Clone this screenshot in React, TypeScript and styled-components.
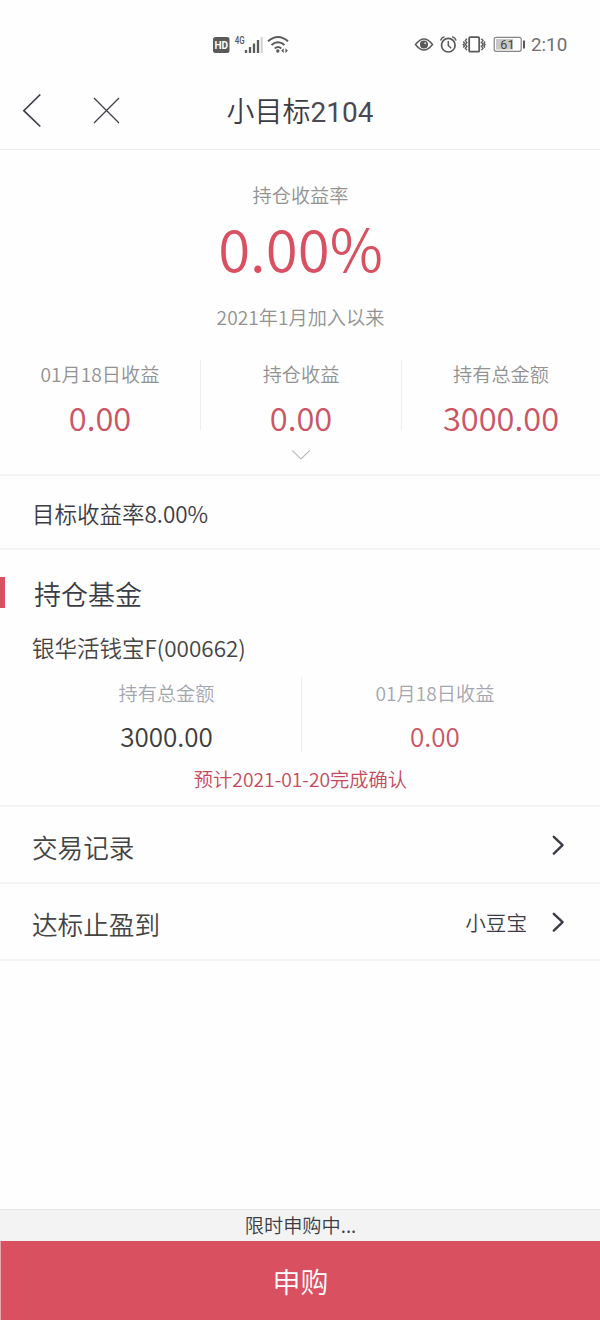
import React from "react";
import styled, { createGlobalStyle } from "styled-components";

const RED = "#d95060";
const INK = "#3c3c46";

const GlobalStyle = createGlobalStyle`
  * { box-sizing: border-box; }
  body {
    margin: 0;
    background: #fefefe;
    font-family: "Noto Sans CJK SC", sans-serif;
    font-weight: 350;
  }
`;

const Screen = styled.div`
  display: flex;
  flex-direction: column;
  width: 600px;
  height: 1320px;
  overflow: hidden;
  background: #fefefe;
  color: ${INK};
`;

const StatusBar = styled.div`
  display: flex;
  align-items: center;
  height: 72px;
  padding: 17px 33px 0 212px;
`;

const StatusGroup = styled.div`
  display: flex;
  align-items: center;
`;

const StatusSpacer = styled.div`
  flex: 1;
`;

const Clock = styled.span`
  width: 36px;
  margin-left: 5px;
  font: 400 18.8px/22px Roboto, sans-serif;
  color: #707070;
  white-space: nowrap;
`;

const NavBar = styled.header`
  display: grid;
  grid-template-columns: 200px 200px 200px;
  align-items: center;
  height: 78px;
  border-bottom: 1px solid #ebebed;
`;

const NavActions = styled.div`
  display: flex;
  align-items: center;
  gap: 51px;
  padding-left: 22px;
`;

const NavTitle = styled.h1`
  margin: 0;
  padding-top: 1px;
  font: 350 28px/40px "Noto Sans CJK SC", sans-serif;
  text-align: center;
  white-space: nowrap;
`;

const TitleNumber = styled.span`
  font-family: Roboto, sans-serif;
  font-weight: 400;
  color: #4a4a54;
`;

const Text = styled.div<{ $size: number; $line: number; $color?: string }>`
  font-size: ${(p) => p.$size}px;
  line-height: ${(p) => p.$line}px;
  color: ${(p) => p.$color ?? INK};
  white-space: nowrap;
`;

const Summary = styled.section`
  display: flex;
  flex-direction: column;
  align-items: center;
  height: 326px;
  padding-top: 31px;
  border-bottom: 2px solid #f3f3f4;
`;

const Caption = styled(Text)`
  padding-left: 1px;
`;

const Rate = styled.div`
  height: 94px;
  padding: 5px 0 0 1px;
`;

const StatRow = styled.div`
  display: grid;
  grid-template-columns: 201px 201px 198px;
  width: 600px;
  margin-top: 29px;
`;

const Stat = styled.div<{ $divided?: boolean }>`
  display: flex;
  flex-direction: column;
  align-items: center;
  height: 70px;
  border-right: ${(p) => (p.$divided ? "1px solid #eeeeef" : "0")};
`;

const Expand = styled.div`
  display: flex;
  height: 11px;
  margin: 19px 0 0 1px;
`;

const TargetRow = styled.section`
  display: flex;
  align-items: center;
  height: 74px;
  padding: 2px 32px 0;
  border-bottom: 2px solid #f3f3f4;
`;

const Holdings = styled.section`
  height: 257px;
  padding-top: 27px;
  border-bottom: 2px solid #f3f3f4;
`;

const SectionHead = styled.div`
  display: flex;
  align-items: center;
  height: 34px;
`;

const Accent = styled.div`
  width: 5px;
  height: 31px;
  margin: -3px 29px 0 0;
  background: ${RED};
`;

const FundName = styled.div`
  padding: 20px 32px 0;
`;

const FundStats = styled.div`
  display: grid;
  grid-template-columns: 302px 298px;
  margin-top: 14px;
`;

const FundStat = styled(Stat)<{ $left?: number; $right?: number }>`
  height: 75px;
  padding: 1px ${(p) => p.$right ?? 0}px 0 ${(p) => p.$left ?? 0}px;
`;

const Notice = styled.div`
  display: flex;
  justify-content: center;
  margin-top: 13px;
  padding-left: 1px;
`;

const MenuRow = styled.div`
  display: flex;
  align-items: center;
  justify-content: space-between;
  height: 77px;
  padding: 0 35px 0 32px;
  border-bottom: 2px solid #f3f3f4;
`;

const MenuLabel = styled.div`
  padding-top: 5px;
  font-size: 25.6px;
  line-height: 38px;
  color: #444;
`;

const MenuEnd = styled.div`
  display: flex;
  align-items: center;
  gap: 24px;
`;

const Footer = styled.footer`
  margin-top: auto;
`;

const Hint = styled.div`
  display: flex;
  justify-content: center;
  height: 32px;
  padding-left: 1px;
  border-top: 1px solid #e6e6e6;
  background: #f3f3f3;
`;

const BuyButton = styled.button`
  display: flex;
  justify-content: center;
  align-items: center;
  width: 100%;
  height: 79px;
  padding: 1px 0 0 0;
  border: 0;
  border-left: 1px solid #eba4ac;
  background: ${RED};
  color: #fff;
  font: 350 28px/40px "Noto Sans CJK SC", sans-serif;
`;

const NetworkIcons = () => (
  <svg width="78" height="22" viewBox="212 34 78 22" fill="none">
    <rect x="213" y="37" width="16.5" height="16" rx="2.5" fill="#5a5a5a" />
    <text x="221.2" y="48.8" fill="#fff" fontFamily="Roboto" fontWeight="700" fontSize="10" textAnchor="middle">HD</text>
    <text x="234.8" y="44" fill="#555" fontFamily="Roboto" fontWeight="500" fontSize="10.5" textLength="10" lengthAdjust="spacingAndGlyphs">4G</text>
    <path d="M246 53v-3M250 53v-6M254 53v-9.5M258 53v-13" stroke="#5a5a5a" strokeWidth="2.3" />
    <path d="M261.7 53V37" stroke="#d0d0d0" strokeWidth="2" />
    <path d="M268 41.3Q278 32.7 288 41.3M271.5 45Q278 39.5 284.5 45M274.7 48.4Q278 45.8 281.3 48.4" stroke="#5a5a5a" strokeWidth="1.9" />
    <circle cx="277.8" cy="51" r="1.7" fill="#5a5a5a" />
    <path d="M281.2 50.7l2.5-2.4v4.8zM287.9 50.7l-2.5-2.4v4.8z" fill="#5a5a5a" />
  </svg>
);

const DeviceIcons = () => (
  <svg width="112" height="22" viewBox="414 34 112 22" fill="none" stroke="#5a5a5a" strokeWidth="1.5">
    <path d="M415.5 44.5Q424 33.5 432.5 44.5Q424 55.5 415.5 44.5Z" />
    <circle cx="424" cy="44.5" r="3.3" fill="#5a5a5a" />
    <circle cx="425.2" cy="43.3" r="1" fill="#ddd" stroke="none" />
    <circle cx="448.3" cy="45.2" r="6.8" strokeWidth="1.7" />
    <path d="M448.3 41v4.5l2.8 2.7M440.5 40.5q1-3 4-3.9M452.1 36.6q3 .9 4 3.9" />
    <rect x="469.2" y="37.2" width="10" height="14.5" rx="1" strokeWidth="1.8" />
    <path d="M467 38.7l-1.7 1.9 1.7 1.9-1.7 1.9 1.7 1.9-1.7 1.9 1.7 1.9M463.3 41.5l1.2 1.5-1.2 1.5 1.2 1.5-1.2 1.5M481.4 38.7l1.7 1.9-1.7 1.9 1.7 1.9-1.7 1.9 1.7 1.9-1.7 1.9M485.1 41.5l-1.2 1.5 1.2 1.5-1.2 1.5 1.2 1.5" strokeWidth="1.3" />
    <rect x="494.2" y="37.3" width="27" height="14" rx="2" stroke="#858585" strokeWidth="1.2" />
    <rect x="496" y="39" width="17" height="10.6" fill="#c8c8c8" stroke="none" />
    <path d="M524 40.5v8" strokeWidth="2" />
    <text x="507.4" y="49" fill="#444" stroke="none" fontFamily="Roboto" fontWeight="400" fontSize="12.5" textAnchor="middle">61</text>
  </svg>
);

const BackIcon = () => (
  <svg width="20" height="34" viewBox="0 0 20 34" fill="none" stroke={INK} strokeWidth="1.6">
    <path d="M18.3 .5L1.8 16.7L18.3 32.5" />
  </svg>
);

const CloseIcon = () => (
  <svg width="27" height="27" viewBox="0 0 27 27" fill="none" stroke={INK} strokeWidth="1.2">
    <path d="M1 1L26 26M26 1L1 26" />
  </svg>
);

const ExpandIcon = () => (
  <svg width="20" height="11" viewBox="0 0 20 11" fill="none" stroke="#b9b9bd" strokeWidth="1.1">
    <path d="M1.2 1.3L10 10L18.8 1.3" />
  </svg>
);

const ArrowIcon = () => (
  <svg width="14" height="22" viewBox="0 0 14 22" fill="none" stroke={INK} strokeWidth="2.4" strokeLinecap="round" strokeLinejoin="round">
    <path d="M2.8 2.8L11.6 11.2L2.8 19.6" />
  </svg>
);

const stats = [
  { label: "01月18日收益", value: "0.00" },
  { label: "持仓收益", value: "0.00" },
  { label: "持有总金额", value: "3000.00" },
];

export default function App() {
  return (
    <Screen>
      <GlobalStyle />
      <StatusBar>
        <NetworkIcons />
        <StatusSpacer />
        <StatusGroup>
          <DeviceIcons />
          <Clock>2:10</Clock>
        </StatusGroup>
      </StatusBar>
      <NavBar>
        <NavActions>
          <BackIcon />
          <CloseIcon />
        </NavActions>
        <NavTitle>
          小目标<TitleNumber>2104</TitleNumber>
        </NavTitle>
      </NavBar>
      <Summary>
        <Caption $size={19.2} $line={28} $color="#929292">持仓收益率</Caption>
        <Rate>
          <Text $size={58.2} $line={66} $color={RED}>0.00%</Text>
        </Rate>
        <Caption $size={19.2} $line={28} $color="#929292">2021年1月加入以来</Caption>
        <StatRow>
          {stats.map((s, i) => (
            <Stat key={s.label} $divided={i < 2}>
              <Text $size={19.2} $line={28} $color="#929292">{s.label}</Text>
              <Text $size={32.6} $line={57} $color="#cb5465">{s.value}</Text>
            </Stat>
          ))}
        </StatRow>
        <Expand>
          <ExpandIcon />
        </Expand>
      </Summary>
      <TargetRow>
        <Text $size={22.5} $line={32}>目标收益率8.00%</Text>
      </TargetRow>
      <Holdings>
        <SectionHead>
          <Accent />
          <Text $size={27} $line={34}>持仓基金</Text>
        </SectionHead>
        <FundName>
          <Text $size={22.5} $line={32} $color="#444">银华活钱宝F(000662)</Text>
        </FundName>
        <FundStats>
          <FundStat $divided $left={32}>
            <Text $size={19.2} $line={30} $color="#a4a6b0">持有总金额</Text>
            <Text $size={26} $line={56} $color="#3c3c3c">3000.00</Text>
          </FundStat>
          <FundStat $right={32}>
            <Text $size={19.2} $line={30} $color="#a4a6b0">01月18日收益</Text>
            <Text $size={26} $line={56} $color="#cb5465">0.00</Text>
          </FundStat>
        </FundStats>
        <Notice>
          <Text $size={19.25} $line={28} $color="#c44a5e">预计2021-01-20完成确认</Text>
        </Notice>
      </Holdings>
      <MenuRow>
        <MenuLabel>交易记录</MenuLabel>
        <ArrowIcon />
      </MenuRow>
      <MenuRow>
        <MenuLabel>达标止盈到</MenuLabel>
        <MenuEnd>
          <Text $size={20.6} $line={30}>小豆宝</Text>
          <ArrowIcon />
        </MenuEnd>
      </MenuRow>
      <Footer>
        <Hint>
          <Text $size={19.2} $line={31}>限时申购中...</Text>
        </Hint>
        <BuyButton>申购</BuyButton>
      </Footer>
    </Screen>
  );
}
